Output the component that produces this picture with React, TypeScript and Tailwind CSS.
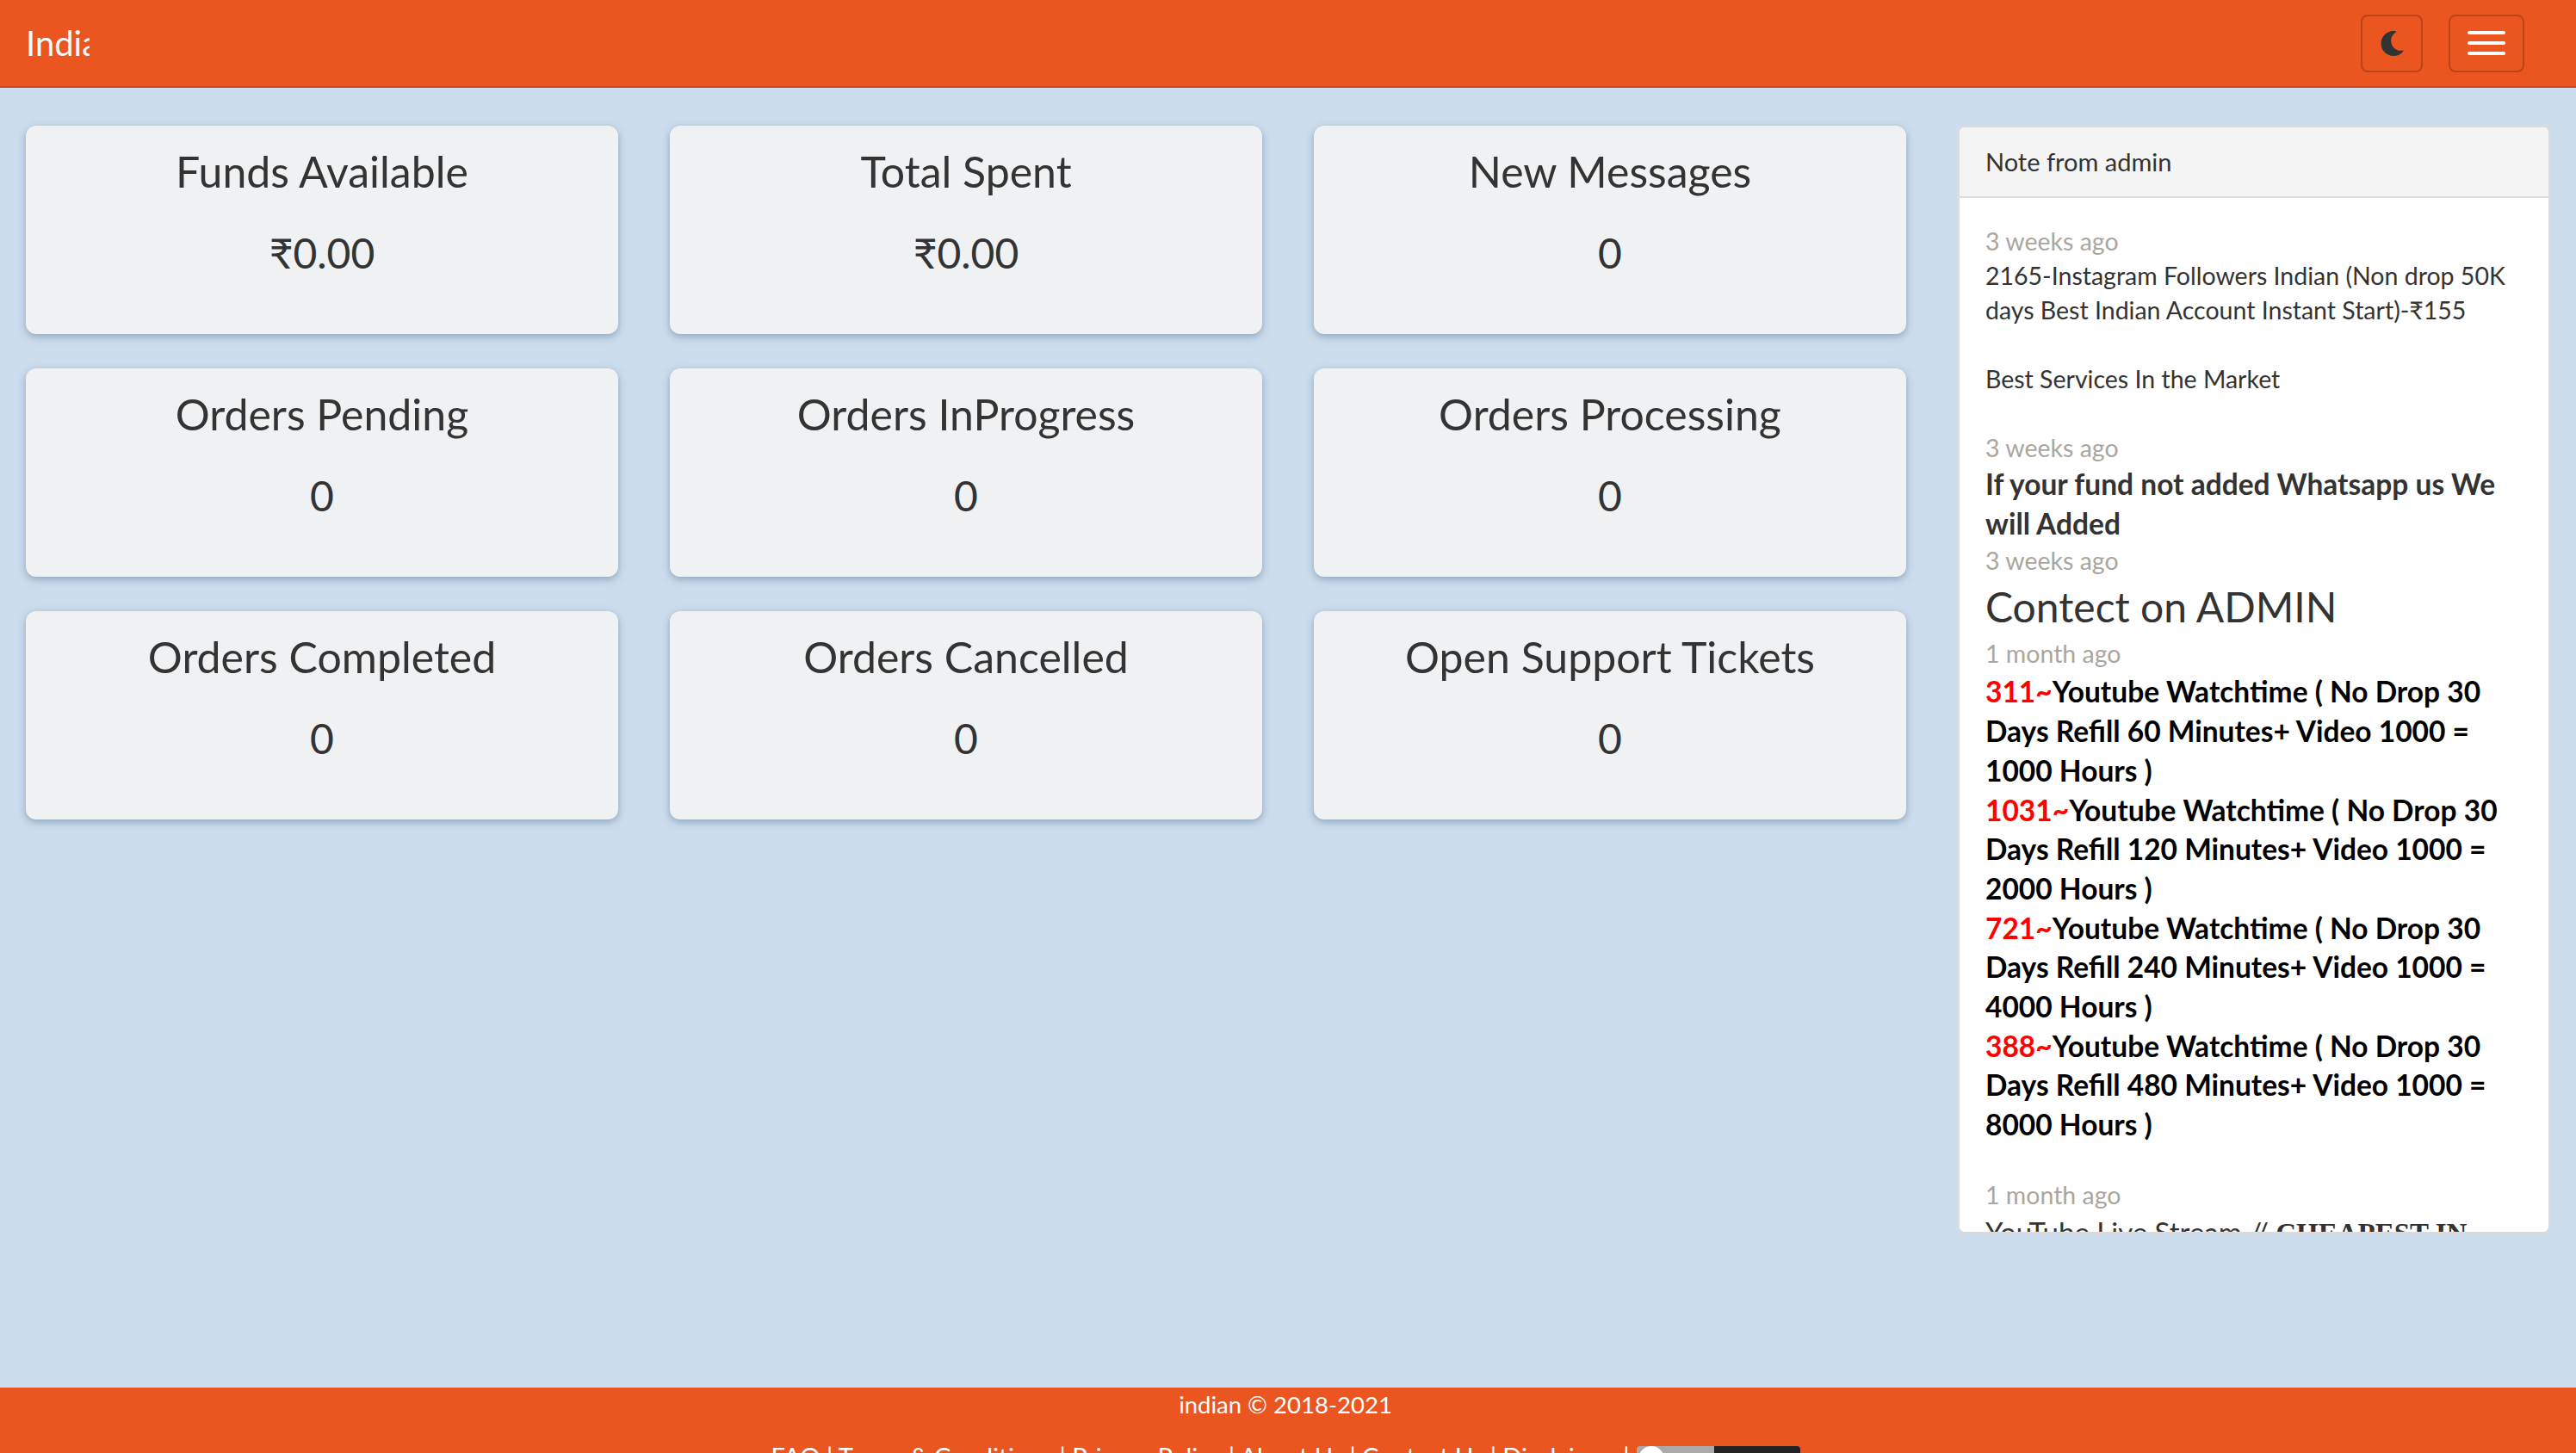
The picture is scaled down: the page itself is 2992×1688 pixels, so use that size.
const cards = [
  { title: "Funds Available", value: "₹0.00" },
  { title: "Total Spent", value: "₹0.00" },
  { title: "New Messages", value: "0" },
  { title: "Orders Pending", value: "0" },
  { title: "Orders InProgress", value: "0" },
  { title: "Orders Processing", value: "0" },
  { title: "Orders Completed", value: "0" },
  { title: "Orders Cancelled", value: "0" },
  { title: "Open Support Tickets", value: "0" },
];

const watchtime = [
  { id: "311", text: "Days Refill 60 Minutes+ Video 1000 =", end: "1000 Hours )" },
  { id: "1031", text: "Days Refill 120 Minutes+ Video 1000 =", end: "2000 Hours )" },
  { id: "721", text: "Days Refill 240 Minutes+ Video 1000 =", end: "4000 Hours )" },
  { id: "388", text: "Days Refill 480 Minutes+ Video 1000 =", end: "8000 Hours )" },
];

const Ago = ({ children }: any) => (
  <div className="text-[28.5px] leading-[40px] text-[#aaa69d]">{children}</div>
);

function StatCard({ title, value }: { title: string; value: string }) {
  return (
    <div className="h-[242px] rounded-xl bg-[#eff1f3] pt-[24px] text-center text-[#333] shadow-[0_3px_10px_rgba(80,110,140,0.5)]">
      <div className="text-[50px] leading-[58px]">{title}</div>
      <div className="mt-[37px] text-[48px] leading-[58px]">{value}</div>
    </div>
  );
}

export default function App() {
  return (
    <div className="flex h-screen flex-col overflow-hidden bg-[#ccdded] font-['Lato',sans-serif]">
      <nav className="flex h-[102px] shrink-0 items-center border-b-2 border-[#c9481b] bg-[#eb5520] pl-[30px] pr-[60px]">
        <div className="w-[74px] overflow-hidden text-[40px] leading-[50px] whitespace-nowrap text-[#eefaff]">
          Indian
        </div>
        <button className="ml-auto flex h-[67px] w-[72px] items-center justify-center rounded-lg border-2 border-[#b9431a]">
          <svg viewBox="0 0 512 512" className="h-[29px] w-[29px]" fill="#333">
            <path d="M283.211 512c78.962 0 151.079-35.925 198.857-94.792 7.068-8.708-.639-21.43-11.562-19.35-124.203 23.654-238.262-71.576-238.262-196.954 0-72.222 38.662-138.635 101.498-174.394 9.686-5.512 7.25-20.197-3.756-22.23A258.156 258.156 0 0 0 283.211 0c-141.309 0-256 114.511-256 256 0 141.309 114.511 256 256 256z" />
          </svg>
        </button>
        <button className="ml-[30px] flex h-[67px] w-[88px] flex-col items-center justify-center gap-[8px] rounded-lg border-2 border-[#b9431a]">
          <span className="h-[4px] w-[44px] rounded-full bg-white" />
          <span className="h-[4px] w-[44px] rounded-full bg-white" />
          <span className="h-[4px] w-[44px] rounded-full bg-white" />
        </button>
      </nav>

      <main className="flex min-h-0 flex-1 items-start pt-[44px] pl-[30px]">
        <div className="grid w-[2184px] grid-cols-3 gap-x-[60px] gap-y-[40px]">
          {cards.map((c) => (
            <StatCard key={c.title} title={c.title} value={c.value} />
          ))}
        </div>

        <div className="ml-[60px] flex h-[1287px] w-[688px] flex-col overflow-hidden rounded-lg border-2 border-[#dcdcdc] bg-white text-[#333]">
          <div className="flex h-[82px] shrink-0 items-center border-b-2 border-[#dcdcdc] bg-[#f4f4f4] px-[30px] text-[29px]">
            Note from admin
          </div>
          <div className="min-h-0 flex-1 overflow-hidden px-[30px] pt-[30px]">
            <Ago>3 weeks ago</Ago>
            <div className="text-[28.5px] leading-[40px]">
              2165-Instagram Followers Indian (Non drop 50K
              <br />
              days Best Indian Account Instant Start)-₹155
            </div>
            <div className="mt-[40px] text-[28.5px] leading-[40px]">Best Services In the Market</div>

            <div className="mt-[40px]">
              <Ago>3 weeks ago</Ago>
            </div>
            <div className="text-[33.5px] leading-[45.7px] font-bold">
              If your fund not added Whatsapp us We
              <br />
              will Added
            </div>
            <Ago>3 weeks ago</Ago>
            <div className="mt-[8px] text-[48px] leading-[52px]">Contect on ADMIN</div>
            <div className="mt-[8px]">
              <Ago>1 month ago</Ago>
            </div>

            <div className="mt-[2px] text-[33.5px] leading-[45.7px] font-bold text-black">
              {watchtime.map((w) => (
                <div key={w.id}>
                  <div>
                    <span className="text-[#ff0000]">{w.id}~</span>Youtube Watchtime ( No Drop 30
                  </div>
                  <div>{w.text}</div>
                  <div>{w.end}</div>
                </div>
              ))}
            </div>

            <div className="mt-[38px]">
              <Ago>1 month ago</Ago>
            </div>
            <div className="text-[33px] leading-[46px]">
              YouTube Live Stream // <span className="font-['Liberation_Serif',serif] font-bold">CHEAPEST IN</span>
            </div>
          </div>
        </div>
      </main>

      <footer className="h-[76px] shrink-0 overflow-hidden bg-[#eb5520] pr-[6px] text-center text-[28px] leading-[40px] text-white">
        <div className="text-[27.5px]">indian © 2018-2021</div>
        <div className="mt-[20px] flex items-start justify-center gap-[8px] text-[29px]">
          <span>FAQ | Terms &amp; Conditions | Privacy Policy | About Us | Contact Us | Disclaimer |</span>
          <span className="mt-[8px] flex h-[40px] w-[190px]">
            <span className="w-[90px] rounded-l bg-[#aaa]">
              <span className="ml-[2px] block h-[30px] w-[30px] rounded-full bg-white" />
            </span>
            <span className="w-[100px] rounded-r bg-[#222]" />
          </span>
        </div>
      </footer>
    </div>
  );
}
